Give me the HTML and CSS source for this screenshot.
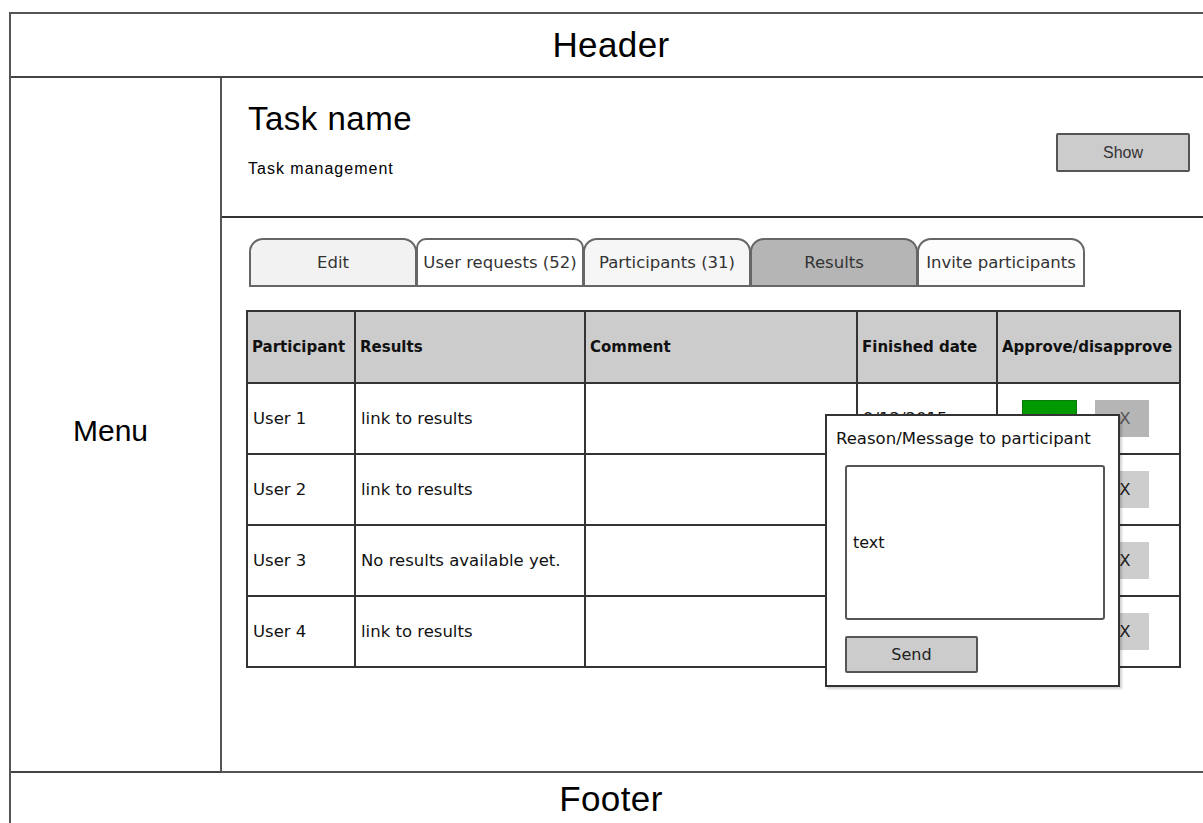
FILE: index.html
```html
<!DOCTYPE html>
<html>
<head>
<meta charset="utf-8">
<link rel="stylesheet" href="styles.css">
</head>
<body>
<div class="frame">
  <header class="header"><span class="big-label">Header</span></header>
  <div class="main">
    <nav class="menu"><span class="menu-label">Menu</span></nav>
    <section class="content">
      <div class="task-head">
        <div class="task-title">
          <h1 class="task-name">Task name</h1>
          <p class="task-sub">Task management</p>
        </div>
        <button class="show-btn">Show</button>
      </div>
      <div class="content-body">
        <div class="tabs">
          <div class="tab tab-edit">Edit</div>
          <div class="tab tab-requests">User requests (52)</div>
          <div class="tab tab-participants">Participants (31)</div>
          <div class="tab tab-results">Results</div>
          <div class="tab tab-invite">Invite participants</div>
        </div>
        <div class="table-wrap">
          <table class="results">
            <colgroup>
              <col class="c1"><col class="c2"><col class="c3"><col class="c4"><col class="c5">
            </colgroup>
            <thead>
              <tr>
                <th>Participant</th>
                <th>Results</th>
                <th>Comment</th>
                <th>Finished date</th>
                <th>Approve/disapprove</th>
              </tr>
            </thead>
            <tbody>
              <tr>
                <td>User 1</td>
                <td>link to results</td>
                <td></td>
                <td>9/12/2015</td>
                <td><div class="actions"><span class="btn-ok">✓</span><span class="btn-x btn-x-active">X</span></div></td>
              </tr>
              <tr>
                <td>User 2</td>
                <td>link to results</td>
                <td></td>
                <td></td>
                <td><div class="actions"><span class="btn-ok">✓</span><span class="btn-x">X</span></div></td>
              </tr>
              <tr>
                <td>User 3</td>
                <td>No results available yet.</td>
                <td></td>
                <td></td>
                <td><div class="actions"><span class="btn-ok">✓</span><span class="btn-x">X</span></div></td>
              </tr>
              <tr>
                <td>User 4</td>
                <td>link to results</td>
                <td></td>
                <td></td>
                <td><div class="actions"><span class="btn-ok">✓</span><span class="btn-x">X</span></div></td>
              </tr>
            </tbody>
          </table>
          <div class="popup">
            <div class="popup-title">Reason/Message to participant</div>
            <div class="popup-text">text</div>
            <button class="send-btn">Send</button>
          </div>
        </div>
      </div>
    </section>
  </div>
  <footer class="footer"><span class="big-label">Footer</span></footer>
</div>
</body>
</html>
```

FILE: styles.css
```css
html, body {
  margin: 0;
  padding: 0;
  background: #fff;
  overflow: hidden;
}
body {
  width: 1203px;
  height: 823px;
  font-family: "DejaVu Sans", "Liberation Sans", sans-serif;
  color: #1a1a1a;
}
.frame {
  margin: 12px 0 0 9px;
  width: 1200px;
  border-left: 2px solid #555;
}
.header {
  height: 62px;
  border-top: 2px solid #555;
  border-bottom: 2px solid #444;
  display: flex;
  align-items: center;
  justify-content: center;
}
.big-label {
  font-family: "Liberation Sans", sans-serif;
  font-size: 35px;
  color: #000;
  letter-spacing: 0.4px;
}
.main {
  display: flex;
  height: 695px;
}
.menu {
  width: 211px;
  border-right: 2px solid #555;
  border-bottom: 2px solid #444;
  display: flex;
  align-items: center;
  justify-content: center;
  padding-top: 12px;
  padding-right: 10px;
  box-sizing: border-box;
  flex: none;
}
.menu-label {
  font-family: "Liberation Sans", sans-serif;
  font-size: 30px;
  color: #000;
}
.content {
  flex: 1;
  border-bottom: 2px solid #555;
  position: relative;
}
.task-head {
  height: 138px;
  border-bottom: 2px solid #333;
  display: flex;
  justify-content: space-between;
  align-items: flex-start;
  padding: 0 0 0 26px;
  width: 955px;
}
.task-name {
  margin: 23px 0 0 0;
  font-family: "Liberation Sans", sans-serif;
  font-weight: normal;
  font-size: 33px;
  line-height: 36px;
  letter-spacing: 0.5px;
  color: #000;
}
.task-sub {
  margin: 22px 0 0 0;
  font-family: "Liberation Sans", sans-serif;
  font-size: 16px;
  line-height: 20px;
  letter-spacing: 1px;
  color: #000;
}
.show-btn {
  margin: 55px 13px 0 0;
  width: 134px;
  height: 39px;
  background: #cccccc;
  border: 2px solid #555;
  border-radius: 2px;
  font-family: "Liberation Sans", sans-serif;
  font-size: 16px;
  color: #333;
  padding: 0;
}
.content-body {
  padding: 20px 0 0 24px;
}
.tabs {
  display: flex;
  margin-left: 3px;
  height: 49px;
}
.tab {
  width: 168px;
  height: 49px;
  box-sizing: border-box;
  border: 2px solid #666;
  border-radius: 14px 14px 0 0;
  margin-right: -1px;
  display: flex;
  align-items: center;
  justify-content: center;
  font-size: 16.5px;
  color: #333;
  white-space: nowrap;
}
.tab-edit { background: #f2f2f2; }
.tab-requests { background: #fff; border-radius: 10px 10px 0 0; }
.tab-participants { background: #f6f6f6; }
.tab-results { background: #b5b5b5; }
.tab-invite { background: #fcfcfc; }
.table-wrap {
  position: relative;
  margin-top: 23px;
}
.results {
  border-collapse: collapse;
  width: 933px;
  table-layout: fixed;
}
.c1 { width: 108px; }
.c2 { width: 230px; }
.c3 { width: 272px; }
.c4 { width: 140px; }
.c5 { width: 183px; }
.results th, .results td {
  border: 2px solid #333;
  padding: 0 5px;
  text-align: left;
  vertical-align: middle;
  white-space: nowrap;
  overflow: hidden;
}
.results th {
  background: #cccccc;
  font-size: 15px;
  font-weight: bold;
  height: 70px;
  color: #111;
  padding: 0 0 0 4px;
}
.results td {
  font-size: 16.5px;
  height: 69px;
  color: #111;
}
.actions {
  display: flex;
  align-items: center;
  gap: 18px;
  padding-left: 19px;
}
.btn-ok {
  width: 55px;
  height: 37px;
  background: #009900;
  border: 1px solid #0a7a0a;
  box-sizing: border-box;
  display: flex;
  align-items: center;
  justify-content: center;
  color: #222;
  font-size: 16px;
}
.btn-x {
  width: 54px;
  height: 37px;
  background: #cdcdcd;
  display: flex;
  align-items: center;
  justify-content: center;
  color: #222;
  font-size: 16.5px;
  padding-left: 6px;
  box-sizing: border-box;
}
.btn-x-active {
  background: #b5b5b5;
  color: #555;
}
.popup {
  position: absolute;
  left: 579px;
  top: 104px;
  width: 295px;
  height: 273px;
  box-sizing: border-box;
  background: #fff;
  border: 2px solid #333;
  box-shadow: 2px 2px 2px rgba(0, 0, 0, 0.18);
  padding: 13px 0 0 9px;
}
.popup-title {
  font-size: 16.5px;
  line-height: 20px;
  color: #111;
  white-space: nowrap;
}
.popup-text {
  margin: 16px 0 0 9px;
  width: 260px;
  height: 155px;
  box-sizing: border-box;
  border: 2px solid #555;
  border-radius: 3px;
  display: flex;
  align-items: center;
  padding-left: 6px;
  font-size: 16px;
  color: #111;
}
.send-btn {
  display: block;
  margin: 16px 0 0 9px;
  width: 133px;
  height: 37px;
  background: #cccccc;
  border: 2px solid #555;
  border-radius: 2px;
  font-family: "DejaVu Sans", sans-serif;
  font-size: 16px;
  color: #222;
  padding: 0;
}
.footer {
  height: 48px;
  display: flex;
  align-items: center;
  justify-content: center;
  padding-top: 2px;
}
```
